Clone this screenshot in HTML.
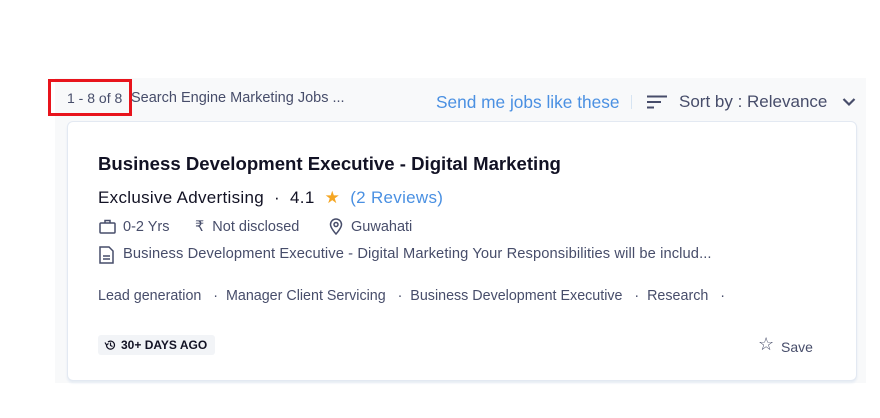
<!DOCTYPE html>
<html><head><style>
body{margin:0;width:880px;height:418px;background:#fff;font-family:"Liberation Sans",sans-serif;position:relative;overflow:hidden}
.bg{position:absolute;left:55px;top:78px;width:811px;height:305px;background:#f8f9fa}
.card{position:absolute;left:67px;top:121px;width:788px;height:258px;background:#fff;border:1px solid #e3e9f2;border-radius:6px;box-shadow:0 2px 2px #e6ecf4}
.a{position:absolute;white-space:nowrap}
.red{position:absolute;left:48px;top:79px;width:78px;height:31px;border:3px solid #e8141c}
</style></head><body>
<div class="bg"></div>
<div class="a" style="left:67px;top:90px;font-size:14px;color:#474d6a">1 - 8 of 8</div>
<div class="a" style="left:131px;top:90px;font-size:14.5px;color:#474d6a">Search Engine Marketing Jobs ...</div>
<div class="red"></div>
<div class="a" style="left:436px;top:92px;font-size:17.3px;color:#4a90e2">Send me jobs like these</div>
<div class="a" style="left:631px;top:95px;width:1px;height:14px;background:#d6e4f2"></div>
<svg class="a" style="left:647px;top:95px" width="20" height="14"><path d="M0 1.5H20M0 7H14M0 12.5H7" stroke="#474d6a" stroke-width="2"/></svg>
<div class="a" style="left:679px;top:92px;font-size:17px;color:#474d6a">Sort by : Relevance</div>
<svg class="a" style="left:842px;top:97px" width="14" height="10"><path d="M1.5 2L7 7.5 12.5 2" stroke="#474d6a" stroke-width="2.2" fill="none"/></svg>
<div class="card"></div>
<div class="a" style="left:98px;top:153px;font-size:18.6px;font-weight:bold;color:#121224">Business Development Executive - Digital Marketing</div>
<div class="a" style="left:98px;top:188px;font-size:17px;letter-spacing:0.3px;color:#121224">Exclusive Advertising &nbsp;·&nbsp; 4.1 &nbsp;<span style="color:#f5a623">★</span> &nbsp;<span style="color:#4a90e2">(2 Reviews)</span></div>
<svg class="a" style="left:99px;top:219px" width="17" height="15"><rect x="1" y="4" width="15" height="10" rx="1" stroke="#474d6a" stroke-width="1.5" fill="none"/><path d="M6 4V1.5H11V4" stroke="#474d6a" stroke-width="1.5" fill="none"/></svg>
<div class="a" style="left:123px;top:219px;font-size:14.5px;color:#474d6a">0-2 Yrs</div>
<div class="a" style="left:195px;top:219px;font-size:14.5px;color:#474d6a">₹ &nbsp;Not disclosed</div>
<svg class="a" style="left:329px;top:218px" width="14" height="17"><path d="M7 16C7 16 1.5 10 1.5 6.5A5.5 5.5 0 0 1 12.5 6.5C12.5 10 7 16 7 16Z" stroke="#474d6a" stroke-width="1.5" fill="none"/><circle cx="7" cy="6.5" r="2" stroke="#474d6a" stroke-width="1.5" fill="none"/></svg>
<div class="a" style="left:351px;top:219px;font-size:14.5px;color:#474d6a">Guwahati</div>
<svg class="a" style="left:99px;top:246px" width="15" height="18"><path d="M1 1H10L14 5V17H1Z" stroke="#474d6a" stroke-width="1.5" fill="none"/><path d="M4 10H11M4 13H11" stroke="#474d6a" stroke-width="1.5"/></svg>
<div class="a" style="left:123px;top:246px;font-size:14.7px;letter-spacing:0.1px;color:#474d6a">Business Development Executive - Digital Marketing Your Responsibilities will be includ...</div>
<div class="a" style="left:98px;top:288px;font-size:14.3px;color:#474d6a">Lead generation &nbsp;&nbsp;·&nbsp;&nbsp;Manager Client Servicing &nbsp;&nbsp;·&nbsp;&nbsp;Business Development Executive &nbsp;&nbsp;·&nbsp;&nbsp;Research &nbsp;&nbsp;·</div>
<div class="a" style="left:98px;top:335px;width:117px;height:20px;background:#f2f4f7;border-radius:3px"></div>
<svg class="a" style="left:104px;top:339px" width="12" height="12"><path d="M2.5 6A4 4 0 1 0 4 3" stroke="#121224" stroke-width="1.2" fill="none"/><path d="M1 3.5L2.5 6 4.5 4.5M6.5 3.5V6.5L8.5 7.5" stroke="#121224" stroke-width="1.2" fill="none"/></svg>
<div class="a" style="left:121px;top:338px;font-size:12px;font-weight:bold;color:#121224">30+ DAYS AGO</div>
<div class="a" style="left:758px;top:334px;font-size:18px;color:#474d6a">☆</div>
<div class="a" style="left:781px;top:339px;font-size:14px;color:#474d6a">Save</div>
</body></html>
